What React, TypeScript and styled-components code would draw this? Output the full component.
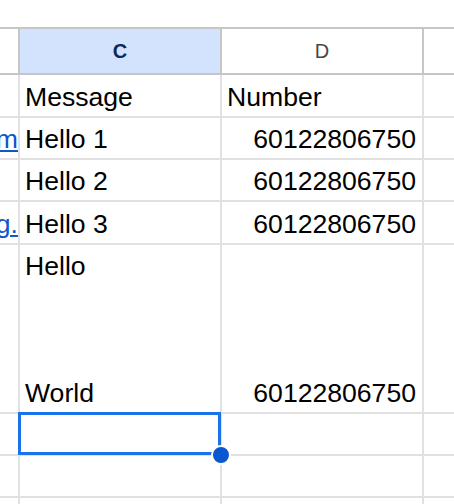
import React from "react";
import styled, { createGlobalStyle } from "styled-components";

const GlobalStyle = createGlobalStyle`
  html, body {
    margin: 0;
    padding: 0;
    background: #ffffff;
    overflow: hidden;
  }
  body {
    font-family: "Liberation Sans", Arial, sans-serif;
  }
`;

const Sheet = styled.div`
  width: 454px;
  height: 504px;
  padding-top: 27px;
  box-sizing: border-box;
  overflow: hidden;
  background: #ffffff;
`;

const HeaderRow = styled.div`
  display: grid;
  grid-template-columns: 20px 202px 202px 60px;
  height: 48px;
  box-sizing: border-box;
  border-top: 2px solid #c4c7c5;
  border-bottom: 2px solid #c4c7c5;
`;

const HeaderCell = styled.div<{ $active?: boolean }>`
  display: flex;
  align-items: center;
  justify-content: center;
  box-sizing: border-box;
  border-right: 2px solid #c4c7c5;
  background: ${(p) => (p.$active ? "#d3e3fd" : "#ffffff")};
  color: ${(p) => (p.$active ? "#0a2a5e" : "#444746")};
  font-weight: ${(p) => (p.$active ? 700 : 400)};
  font-size: 20px;
`;

const Row = styled.div<{ $h: number }>`
  display: grid;
  grid-template-columns: 20px 202px 202px 60px;
  height: ${(p) => p.$h}px;
  box-sizing: border-box;
  border-bottom: 2px solid #e1e1e1;
`;

const Cell = styled.div<{ $align?: "left" | "right" }>`
  display: flex;
  align-items: flex-end;
  justify-content: ${(p) => (p.$align === "right" ? "flex-end" : "flex-start")};
  box-sizing: border-box;
  border-right: 2px solid #e1e1e1;
  padding: 0 6px 1px 5px;
  font-size: 26.6px;
  line-height: 36px;
  color: #000000;
  white-space: nowrap;
  overflow: hidden;
`;

const EdgeCell = styled(Cell)`
  justify-content: flex-end;
  padding: 0 0 1px 0;
`;

const Link = styled.span`
  color: #1155cc;
  text-decoration: underline;
  text-decoration-thickness: 2px;
  text-underline-offset: 2px;
`;

const SelectedCell = styled(Cell)`
  position: relative;
  overflow: visible;
`;

const Selection = styled.div`
  position: absolute;
  left: -2px;
  top: -2px;
  width: 203px;
  height: 43px;
  box-sizing: border-box;
  border: 3px solid #1a73e8;
  z-index: 2;
`;

const Handle = styled.div`
  position: absolute;
  right: -13px;
  bottom: -13px;
  width: 16px;
  height: 16px;
  border-radius: 50%;
  background: #0b57d0;
  border: 2px solid #ffffff;
`;

const Lines = styled.div`
  display: flex;
  flex-direction: column;
  gap: 6.33px;
`;

const Line = styled.div`
  height: 36px;
  line-height: 36px;
`;

type RowData = {
  h: number;
  edge?: string;
  c?: string[];
  d?: string;
};

const rows: RowData[] = [
  { h: 43, c: ["Message"], d: "Number" },
  { h: 42, edge: "example.com", c: ["Hello 1"], d: "60122806750" },
  { h: 42, c: ["Hello 2"], d: "60122806750" },
  { h: 43, edge: "example.org.", c: ["Hello 3"], d: "60122806750" },
  { h: 169, c: ["Hello", "", "", "World"], d: "60122806750" },
];

export default function App() {
  return (
    <>
      <GlobalStyle />
      <Sheet>
        <HeaderRow>
          <HeaderCell />
          <HeaderCell $active>C</HeaderCell>
          <HeaderCell>D</HeaderCell>
          <HeaderCell />
        </HeaderRow>
        {rows.map((r, i) => (
          <Row key={i} $h={r.h}>
            <EdgeCell>{r.edge ? <Link>{r.edge}</Link> : null}</EdgeCell>
            <Cell>
              {r.c && r.c.length > 1 ? (
                <Lines>
                  {r.c.map((t, j) => (
                    <Line key={j}>{t}</Line>
                  ))}
                </Lines>
              ) : (
                r.c?.[0]
              )}
            </Cell>
            <Cell $align={i === 0 ? "left" : "right"}>{r.d}</Cell>
            <Cell />
          </Row>
        ))}
        <Row $h={42}>
          <EdgeCell />
          <SelectedCell>
            <Selection>
              <Handle />
            </Selection>
          </SelectedCell>
          <Cell />
          <Cell />
        </Row>
        <Row $h={42}>
          <EdgeCell />
          <Cell />
          <Cell />
          <Cell />
        </Row>
        <Row $h={42}>
          <EdgeCell />
          <Cell />
          <Cell />
          <Cell />
        </Row>
      </Sheet>
    </>
  );
}
